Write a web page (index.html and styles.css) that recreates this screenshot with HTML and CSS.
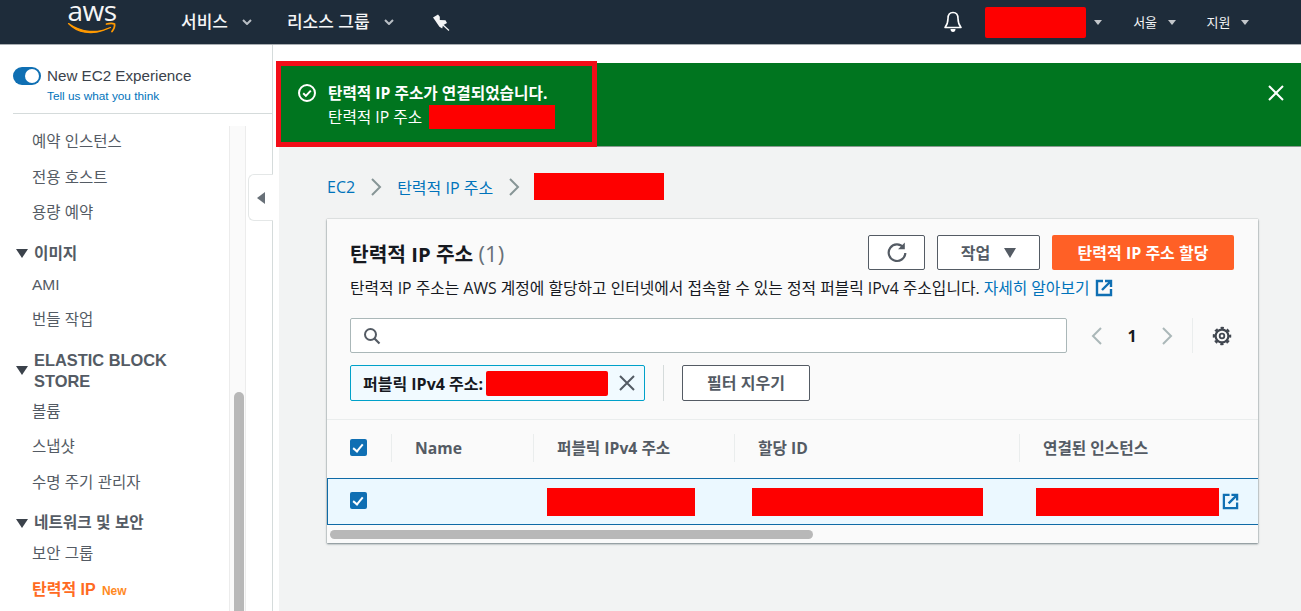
FILE: index.html
```html
<!DOCTYPE html>
<html lang="ko">
  <head>
    <title>탄력적 IP 주소</title>
    <meta name="viewport" content="width=device-width, initial-scale=1.0" />
    <link rel="stylesheet" href="styles.css">
  </head>
  <body>
    <header class="topbar">
      <svg class="logo" width="50" height="44" viewBox="0 0 50 44">
        <text class="logo-text" x="25" y="21" text-anchor="middle">aws</text>
        <path d="M1.500 23.500c13 9.500 29 10 42 4-1-.2-4.500 1.800-7.500 3-11 4-25 3-34.500-7z" fill="#f90" stroke="#f90" stroke-width="1.200" stroke-linejoin="round"/>
        <path d="M39.500 24c3-.8 6.500-.8 8 0 .4 2-1 5.500-2.500 7.500" fill="none" stroke="#f90" stroke-width="1.800" stroke-linecap="round"/>
      </svg>
      <span class="top-menu">서비스</span>
      <svg class="chev" width="10" height="6" viewBox="0 0 10 6"><path d="M1 1l4 4 4-4" fill="none" stroke="#b8bec4" stroke-width="2"/></svg>
      <span class="top-menu top-menu-res">리소스 그룹</span>
      <svg class="chev" width="10" height="6" viewBox="0 0 10 6"><path d="M1 1l4 4 4-4" fill="none" stroke="#b8bec4" stroke-width="2"/></svg>
      <svg class="pin" width="18" height="17" viewBox="0 0 18 17"><path d="M1 3.500L6 .5l1.800 2.200 0 3.300 5.700.2 1.500 2.800-4 2.300-.8 3.200-2.800-1.800L4.500 8.500 2.800 6z" fill="#f4f5f6"/><path d="M11 11l6 5.500" stroke="#f4f5f6" stroke-width="1.200"/></svg>
      <div class="top-right">
        <svg class="bell" width="20" height="24" viewBox="0 0 20 24"><path d="M10 2.500c-3.500 0-5 2.800-5 6 0 4-1 6.500-3 9h16c-2-2.500-3-5-3-9 0-3.200-1.500-6-5-6z" fill="none" stroke="#fff" stroke-width="1.600" stroke-linejoin="round"/><path d="M7.500 19h5c0 2-1 3-2.500 3s-2.500-1-2.500-3z" fill="#fff"/></svg>
        <div class="redact top-redact"></div>
        <span class="caret caret-first"></span>
        <span class="top-small top-region">서울</span>
        <span class="caret"></span>
        <span class="top-small top-support">지원</span>
        <span class="caret"></span>
      </div>
    </header>

    <div class="shell">
      <aside class="sidebar">
        <div class="toggle-box">
          <span class="toggle"><span class="knob"></span></span>
          <div>
            <div class="toggle-title">New EC2 Experience</div>
            <a class="toggle-link">Tell us what you think</a>
          </div>
        </div>
        <div class="side-body">
          <nav class="side-nav">
            <a class="nav-item">예약 인스턴스</a>
            <a class="nav-item">전용 호스트</a>
            <a class="nav-item">용량 예약</a>
            <div class="nav-head"><span class="tri"></span><span>이미지</span></div>
            <a class="nav-item">AMI</a>
            <a class="nav-item">번들 작업</a>
            <div class="nav-head nav-head-long"><span class="tri"></span><span>ELASTIC BLOCK STORE</span></div>
            <a class="nav-item">볼륨</a>
            <a class="nav-item">스냅샷</a>
            <a class="nav-item">수명 주기 관리자</a>
            <div class="nav-head"><span class="tri"></span><span>네트워크 및 보안</span></div>
            <a class="nav-item">보안 그룹</a>
            <a class="nav-item nav-active">탄력적 IP <small>New</small></a>
          </nav>
          <div class="side-track"><div class="side-thumb"></div></div>
        </div>
        <button class="collapse"><span class="collapse-tri"></span></button>
      </aside>

      <main class="main">
        <section class="flash">
          <svg class="flash-icon" width="20" height="20" viewBox="0 0 20 20"><circle cx="10" cy="10" r="8" fill="none" stroke="#fff" stroke-width="2"/><path d="M6.200 10.200l2.700 2.700 4.900-5.300" fill="none" stroke="#fff" stroke-width="2"/></svg>
          <div class="flash-text">
            <div class="flash-title">탄력적 IP 주소가 연결되었습니다.</div>
            <div class="flash-sub">탄력적 IP 주소 <span class="redact flash-redact"></span></div>
          </div>
          <svg class="flash-close" width="16" height="16" viewBox="0 0 16 16"><path d="M1 1l14 14M15 1L1 15" stroke="#fff" stroke-width="2"/></svg>
          <div class="flash-mark"></div>
        </section>

        <div class="content">
          <div class="crumbs">
            <a>EC2</a>
            <svg width="12" height="18" viewBox="0 0 12 18"><path d="M2 1l8 8-8 8" fill="none" stroke="#879596" stroke-width="2"/></svg>
            <a>탄력적 IP 주소</a>
            <svg width="12" height="18" viewBox="0 0 12 18"><path d="M2 1l8 8-8 8" fill="none" stroke="#879596" stroke-width="2"/></svg>
            <div class="redact crumb-redact"></div>
          </div>

          <section class="card">
            <div class="card-top">
              <div class="title-row">
                <h1>탄력적 IP 주소 <span class="count">(1)</span></h1>
                <div class="actions">
                  <button class="btn btn-refresh"><svg width="22" height="22" viewBox="0 0 22 22"><path d="M17.500 6.500A8.300 8.300 0 1 0 19.300 12" fill="none" stroke="#545b64" stroke-width="2.200"/><path d="M18.800 1.500v6.700h-6.700z" fill="#545b64"/></svg></button>
                  <button class="btn btn-action">작업 <span class="btn-tri"></span></button>
                  <button class="btn btn-primary">탄력적 IP 주소 할당</button>
                </div>
              </div>
              <p class="desc">탄력적 IP 주소는 AWS 계정에 할당하고 인터넷에서 접속할 수 있는 정적 퍼블릭 IPv4 주소입니다. <a>자세히 알아보기</a>
                <svg class="ext" width="18" height="18" viewBox="0 0 18 18"><path d="M8 2H2v14h14v-6" fill="none" stroke="#0f6fb3" stroke-width="2.400"/><path d="M7 11l8-8M10 2h6v6" fill="none" stroke="#0f6fb3" stroke-width="2.400"/></svg>
              </p>
              <div class="search-row">
                <div class="search">
                  <svg width="18" height="18" viewBox="0 0 18 18"><circle cx="7.500" cy="7.500" r="5.500" fill="none" stroke="#545b64" stroke-width="2"/><path d="M11.500 11.500l5 5" stroke="#545b64" stroke-width="2.200"/></svg>
                </div>
                <div class="pager">
                  <svg width="12" height="20" viewBox="0 0 12 20"><path d="M10 2l-8 8 8 8" fill="none" stroke="#aab7b8" stroke-width="2"/></svg>
                  <b>1</b>
                  <svg width="12" height="20" viewBox="0 0 12 20"><path d="M2 2l8 8-8 8" fill="none" stroke="#aab7b8" stroke-width="2"/></svg>
                </div>
                <div class="pager-line"></div>
                <svg class="gear" width="20" height="20" viewBox="0 0 20 20"><circle cx="10" cy="10" r="6.400" fill="none" stroke="#414750" stroke-width="2.200"/><circle cx="10" cy="10" r="8" fill="none" stroke="#414750" stroke-width="2.500" stroke-dasharray="3.200 3.080" stroke-dashoffset="1.600"/><circle cx="10" cy="10" r="2.300" fill="none" stroke="#414750" stroke-width="1.800"/></svg>
              </div>
              <div class="filter-row">
                <div class="chip">
                  <b>퍼블릭 IPv4 주소:</b>
                  <div class="redact chip-redact"></div>
                  <svg width="16" height="16" viewBox="0 0 16 16"><path d="M1 1l14 14M15 1L1 15" stroke="#545b64" stroke-width="2"/></svg>
                </div>
                <div class="filter-line"></div>
                <button class="btn btn-clear">필터 지우기</button>
              </div>
            </div>

            <div class="tbl-row tbl-head">
              <div class="cell cell-check"><span class="check"></span></div>
              <div class="cell">Name</div>
              <div class="cell">퍼블릭 IPv4 주소</div>
              <div class="cell">할당 ID</div>
              <div class="cell">연결된 인스턴스</div>
            </div>
            <div class="tbl-row tbl-selected">
              <div class="cell cell-check"><span class="check"></span></div>
              <div class="cell"></div>
              <div class="cell"><div class="redact red-ip"></div></div>
              <div class="cell"><div class="redact red-alloc"></div></div>
              <div class="cell cell-inst">
                <div class="redact red-inst"></div>
                <svg width="17" height="17" viewBox="0 0 18 18"><path d="M8 2H2v14h14v-6" fill="none" stroke="#0f6fb3" stroke-width="2.400"/><path d="M7 11l8-8M10 2h6v6" fill="none" stroke="#0f6fb3" stroke-width="2.400"/></svg>
              </div>
            </div>
            <div class="hscroll"><div class="hthumb"></div></div>
          </section>
        </div>
      </main>
    </div>
  </body>
</html>
```

FILE: styles.css
```css
/* Page */
html,
body {
  height: 100%;
  margin: 0;
  overflow: hidden;
}

body {
  display: flex;
  flex-direction: column;
  font-family: "Open Sans", "Noto Sans CJK KR", sans-serif;
  font-size: 15px;
  color: #16191f;
  background-color: #fff;
}

a {
  color: #0073bb;
}

button {
  font-family: inherit;
}

.redact {
  background-color: #fe0000;
}

/* Top bar */
.topbar {
  display: flex;
  align-items: center;
  flex: none;
  height: 44px;
  padding-left: 67px;
  background-color: #1e2c3a;
  border-bottom: 1px solid #a9aeb2;
  color: #f4f5f6;
}

.logo {
  flex: none;
  margin-right: 64px;
}

.logo-text {
  font-family: "Open Sans", sans-serif;
  font-size: 28px;
  letter-spacing: -0.5px;
  fill: #f4f5f6;
}

.top-menu {
  font-size: 17px;
  font-weight: 500;
  line-height: 44px;
}

.chev {
  margin-left: 14px;
}

.top-menu-res {
  margin-left: 35px;
}

.pin {
  margin-left: 38px;
}

.top-right {
  display: flex;
  align-items: center;
  margin-left: auto;
  padding-right: 52px;
}

.bell {
  margin-right: 22px;
}

.top-redact {
  width: 101px;
  height: 31px;
  border-radius: 2px;
}

.caret {
  width: 0;
  height: 0;
  margin-left: 10.500px;
  border-top: 5px solid #c3c7cb;
  border-left: 4.500px solid transparent;
  border-right: 4.500px solid transparent;
}

.caret-first {
  margin-left: 8.500px;
}

.top-small {
  font-size: 13px;
  line-height: 44px;
}

.top-region {
  margin-left: 31px;
}

.top-support {
  margin-left: 31px;
}

/* Sidebar */
.shell {
  display: flex;
  flex: 1;
  min-height: 0;
}

.sidebar {
  position: relative;
  display: flex;
  flex-direction: column;
  flex: none;
  box-sizing: border-box;
  width: 273px;
  border-right: 1px solid #d5dbdb;
  font-family: "Liberation Sans", "Noto Sans CJK KR", sans-serif;
}

.toggle-box {
  display: flex;
  flex: none;
  gap: 6px;
  box-sizing: border-box;
  height: 69px;
  margin-left: 13px;
  padding-top: 22px;
  border-bottom: 1px solid #d5dbdb;
}

.toggle {
  display: flex;
  justify-content: flex-end;
  box-sizing: border-box;
  width: 28px;
  height: 18px;
  padding: 2px;
  border-radius: 9px;
  background-color: #0f6fb3;
}

.knob {
  width: 14px;
  height: 14px;
  border-radius: 50%;
  background-color: #fff;
}

.toggle-title {
  font-size: 15.200px;
  line-height: 18px;
  color: #3b424b;
}

.toggle-link {
  display: block;
  margin-top: 4px;
  font-size: 11.800px;
  line-height: 14px;
}

.side-body {
  display: flex;
  flex: 1;
  min-height: 0;
  margin-top: 12px;
}

.side-nav {
  flex: none;
  box-sizing: border-box;
  width: 230px;
  padding-top: 1px;
  overflow: hidden;
  color: #545b64;
}

.nav-item {
  display: block;
  height: 30px;
  margin-bottom: 5.500px;
  padding-left: 32px;
  font-size: 15.500px;
  line-height: 30px;
  color: #545b64;
}

.nav-head {
  display: flex;
  align-items: center;
  gap: 6px;
  margin: 10.500px 0 1px;
  padding: 5px 20px 5px 16px;
  font-size: 15.700px;
  font-weight: 700;
  line-height: 20px;
  color: #545b64;
}

.nav-head-long {
  margin-top: 9.500px;
  padding-bottom: 4px;
  font-size: 16.400px;
  line-height: 21px;
}

.tri {
  flex: none;
  width: 0;
  height: 0;
  border-top: 9px solid #3b424b;
  border-left: 6px solid transparent;
  border-right: 6px solid transparent;
}

.nav-active {
  font-size: 16px;
  font-weight: 700;
  color: #ff6a22;
}

.nav-active small {
  margin-left: 2px;
  font-size: 12px;
  color: #ff8a1f;
}

.side-track {
  box-sizing: border-box;
  flex: none;
  width: 17px;
  overflow: hidden;
  padding-top: 266px;
  padding-left: 4px;
  margin-left: -1px;
  border-left: 1px solid #ececec;
  border-right: 1px solid #ececec;
  background-color: #fafafa;
}

.side-thumb {
  width: 10px;
  height: 300px;
  border-radius: 5px;
  background-color: #b8b8b8;
}

.collapse {
  position: absolute;
  left: 248px;
  top: 129px;
  display: flex;
  align-items: center;
  justify-content: center;
  width: 25px;
  height: 47px;
  padding: 0;
  border: 1px solid #e4e7e7;
  border-right: none;
  border-radius: 6px 0 0 6px;
  background-color: #fff;
}

.collapse-tri {
  width: 0;
  height: 0;
  border-right: 8px solid #687078;
  border-top: 6.500px solid transparent;
  border-bottom: 6.500px solid transparent;
}

/* Main column */
.main {
  display: flex;
  flex-direction: column;
  flex: 1;
  min-width: 0;
  padding: 18px 0 0 6px;
}

.flash {
  position: relative;
  display: flex;
  align-items: flex-start;
  flex: none;
  box-sizing: border-box;
  height: 84px;
  padding: 18px 16px 0 18px;
  background-color: #00751f;
  border-bottom: 1px solid #8a9a90;
  color: #fff;
}

.flash-icon {
  flex: none;
  margin: 2px 11px 0 0;
}

.flash-text {
  flex: 1;
  font-size: 15.700px;
  line-height: 24px;
}

.flash-title {
  font-weight: 700;
}

.flash-sub {
  display: flex;
  align-items: center;
  gap: 7px;
}

.flash-redact {
  flex: none;
  width: 126px;
  height: 24px;
}

.flash-close {
  flex: none;
  margin: 4px 1px 0 0;
}

.flash-mark {
  position: absolute;
  left: -3px;
  top: -2px;
  box-sizing: border-box;
  width: 321px;
  height: 86px;
  border: 5px solid #f30d18;
}

.content {
  flex: 1;
  padding: 26px 43px 0 48px;
  background-color: #f2f3f3;
}

.crumbs {
  display: flex;
  align-items: center;
  gap: 15px;
  height: 27px;
  font-size: 16px;
}

.crumb-redact {
  width: 130px;
  height: 27px;
  margin-left: -1px;
}

/* Card */
.card {
  margin-top: 19px;
  background-color: #fafafa;
  box-shadow: 0 1px 2px rgba(0, 28, 36, 0.5), 0 0 1px rgba(0, 28, 36, 0.3);
}

.card-top {
  box-sizing: border-box;
  height: 201px;
  padding: 16px 24px 0 23px;
  border-bottom: 1px solid #eaeded;
}

.title-row {
  display: flex;
  align-items: center;
  justify-content: space-between;
  height: 35px;
}

h1 {
  margin: 0;
  padding-top: 2px;
  font-size: 20.300px;
  font-weight: 700;
  line-height: 35px;
  color: #16191f;
}

.count {
  font-size: 22px;
  font-weight: 400;
  color: #687078;
}

.actions {
  display: flex;
  gap: 12px;
}

.btn {
  box-sizing: border-box;
  height: 35px;
  padding: 0 0 2px;
  border: 1px solid #545b64;
  border-radius: 2px;
  background-color: #fff;
  font-size: 16px;
  font-weight: 700;
  color: #545b64;
}

.btn-refresh {
  display: flex;
  align-items: center;
  justify-content: center;
  width: 57px;
}

.btn-action {
  display: flex;
  align-items: center;
  justify-content: center;
  gap: 14px;
  width: 103px;
}

.btn-tri {
  width: 0;
  height: 0;
  margin-top: 2px;
  border-top: 10px solid #545b64;
  border-left: 6.500px solid transparent;
  border-right: 6.500px solid transparent;
}

.btn-primary {
  width: 182px;
  border: none;
  background-color: #ff6026;
  color: #fff;
}

.desc {
  display: flex;
  align-items: center;
  gap: 4px;
  height: 20px;
  margin: 8px 0 0;
  font-size: 15.800px;
  line-height: 20px;
  white-space: nowrap;
}

.ext {
  margin-left: 2px;
}

.search-row {
  display: flex;
  align-items: center;
  margin-top: 20px;
}

.search {
  display: flex;
  align-items: center;
  flex: none;
  box-sizing: border-box;
  width: 717px;
  height: 35px;
  padding-left: 12px;
  border: 1px solid #aab7b8;
  border-radius: 2px;
  background-color: #fff;
}

.pager {
  display: flex;
  align-items: center;
  gap: 24.500px;
  margin-left: 24px;
  font-size: 16px;
}

.pager-line {
  width: 1px;
  height: 35px;
  margin-left: 19px;
  background-color: #eaeded;
}

.gear {
  margin-left: 19px;
}

.filter-row {
  display: flex;
  align-items: center;
  margin-top: 12px;
}

.chip {
  display: flex;
  align-items: center;
  box-sizing: border-box;
  width: 295px;
  height: 36px;
  padding-left: 12px;
  border: 1px solid #00a1c9;
  border-radius: 2px;
  background-color: #f1faff;
  font-size: 16px;
  white-space: nowrap;
}

.chip-redact {
  flex: none;
  width: 122px;
  height: 25px;
  margin: 0 11px 0 3px;
  border-radius: 2px;
}

.filter-line {
  width: 1px;
  height: 36px;
  margin: 0 18px;
  background-color: #d5dbdb;
}

.btn-clear {
  width: 128px;
  height: 36px;
}

/* Table */
.tbl-row {
  display: grid;
  grid-template-columns: 64px 142px 201px 285px 1fr;
  box-sizing: border-box;
}

.cell {
  display: flex;
  align-items: center;
  min-width: 0;
  padding-left: 24px;
  white-space: nowrap;
}

.cell-check {
  padding-left: 23px;
}

.check {
  position: relative;
  display: block;
  box-sizing: border-box;
  width: 17px;
  height: 17px;
  border-radius: 2px;
  background-color: #0f6fb3;
}

.check::after {
  content: "";
  position: absolute;
  left: 5px;
  top: 2.500px;
  width: 4px;
  height: 8px;
  border-right: 2px solid #fff;
  border-bottom: 2px solid #fff;
  transform: rotate(40deg);
}

.tbl-head {
  height: 58px;
  font-size: 15.700px;
  font-weight: 700;
  color: #545b64;
}

.tbl-head .cell {
  position: relative;
  padding-bottom: 3px;
}

.tbl-head .cell + .cell::before {
  content: "";
  position: absolute;
  left: 0;
  top: 14px;
  bottom: 16px;
  width: 1px;
  background-color: #eaeded;
}

.tbl-selected {
  height: 47px;
  border: 1px solid #0f6aa6;
  border-right: none;
  background-color: #ebf8ff;
}

.tbl-selected .cell-check {
  padding-left: 22px;
  padding-bottom: 2px;
}

.red-ip {
  width: 148px;
  height: 28px;
  margin-left: -11px;
}

.red-alloc {
  width: 231px;
  height: 28px;
  margin-left: -7px;
}

.cell-inst {
  gap: 3px;
  padding-left: 16px;
}

.red-inst {
  flex: none;
  width: 183px;
  height: 28px;
}

.hscroll {
  height: 18px;
  padding: 5px 0 0 3px;
  box-sizing: border-box;
}

.hthumb {
  width: 483px;
  height: 9px;
  border-radius: 5px;
  background-color: #b8b8b8;
}
```
